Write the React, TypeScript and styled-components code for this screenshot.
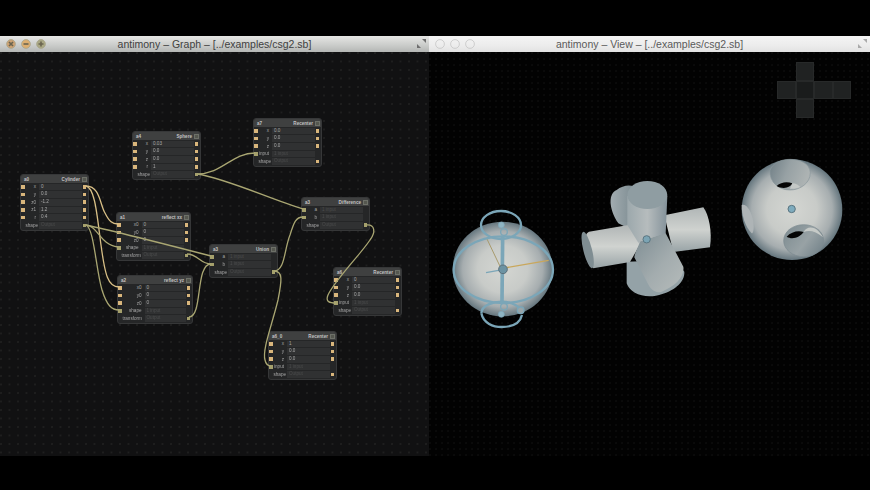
import styled, { createGlobalStyle } from "styled-components";

const GlobalStyle = createGlobalStyle`
  html, body {
    margin: 0;
    padding: 0;
    background: #000;
    overflow: hidden;
  }
`;

const Page = styled.div`
  width: 870px;
  height: 490px;
  background: #000;
  padding-top: 36px;
  box-sizing: border-box;
  font-family: "Liberation Sans", Arial, sans-serif;
`;

const Windows = styled.div`
  display: flex;
  height: 420px;
`;

const Window = styled.section<{ $width: number }>`
  width: ${(p) => p.$width}px;
  display: flex;
  flex-direction: column;
`;

const TitleBar = styled.header<{ $active?: boolean }>`
  height: 16px;
  position: relative;
  display: flex;
  align-items: center;
  justify-content: center;
  font-size: 10.5px;
  color: ${(p) => (p.$active ? "#3f3f3f" : "#5a5a5a")};
  background: ${(p) =>
    p.$active
      ? "linear-gradient(#e6e6e4, #c9cbc9 60%, #b4b6b4)"
      : "linear-gradient(#f4f4f4, #ececec 60%, #e2e2e2)"};
`;

const Lights = styled.div`
  position: absolute;
  left: 6px;
  top: 3px;
  display: flex;
  gap: 5px;
`;

const Light = styled.svg`
  width: 10px;
  height: 10px;
`;

const ResizeGrip = styled.svg`
  position: absolute;
  right: 2px;
  top: 2px;
  width: 11px;
  height: 11px;
`;

const GraphCanvas = styled.div`
  flex: 1;
  position: relative;
  overflow: hidden;
  background-color: #111112;
  background-image: radial-gradient(circle at 1px 1px, #1f1f1f 0.7px, transparent 1px);
  background-size: 8.5px 8.5px;
`;

const Wires = styled.svg`
  position: absolute;
  inset: 0;
  width: 100%;
  height: 100%;
  z-index: 2;
  pointer-events: none;
  filter: blur(0.3px);
`;

const ViewCanvas = styled.div`
  flex: 1;
  position: relative;
  overflow: hidden;
  background-color: #020202;
  background-image: radial-gradient(circle at 1px 1px, #0c0c0c 0.6px, transparent 1px);
  background-size: 6px 6px;
`;

const Scene = styled.svg`
  position: absolute;
  inset: 0;
  width: 100%;
  height: 100%;
`;

const ViewCube = styled.div`
  position: absolute;
  left: 348px;
  top: 10px;
  display: grid;
  grid-template-columns: repeat(4, 18.5px);
  grid-template-rows: repeat(3, 18.5px);
`;

const CubeFace = styled.div<{ $col: number; $row: number; $dark?: boolean }>`
  grid-column: ${(p) => p.$col};
  grid-row: ${(p) => p.$row};
  box-sizing: border-box;
  background: ${(p) => (p.$dark ? "#1a1c1c" : "#202222")};
  border: 1px solid #272929;
`;

const NodeBox = styled.div<{ $x: number; $y: number; $w: number }>`
  position: absolute;
  left: ${(p) => p.$x}px;
  top: ${(p) => p.$y}px;
  width: ${(p) => p.$w}px;
  box-sizing: border-box;
  padding-bottom: 1px;
  background: #252627;
  border: 1px solid #363738;
  border-radius: 3px;
  font-size: 4.6px;
  line-height: 7px;
  color: #a8a8a8;
  filter: blur(0.35px);
`;

const NodeHeader = styled.div`
  height: 8px;
  display: flex;
  align-items: center;
  gap: 2px;
  padding: 0 1px 0 3px;
  background: #3f4040;
  border-radius: 2px 2px 0 0;
  font-weight: bold;
  color: #c2c2c2;
`;

const NodeName = styled.span`
  flex: 1;
`;

const NodeMenu = styled.span`
  width: 5px;
  height: 5px;
  box-sizing: border-box;
  border: 1px solid #6d7068;
  background: #55574f;
`;

const NodeRow = styled.div<{ $label: number }>`
  display: grid;
  grid-template-columns: 3.5px ${(p) => p.$label}px 1fr 3.5px;
  align-items: center;
  column-gap: 1px;
  height: 7.7px;
  padding: 0 2px 0 0;
`;

const Port = styled.span<{ $wired?: boolean }>`
  width: 3.5px;
  height: 3.5px;
  background: ${(p) => (p.$wired ? "#a5a06c" : "#d9b67c")};
`;

const RowLabel = styled.span`
  text-align: right;
  padding-right: 2px;
  color: #a6a6a6;
`;

const RowField = styled.span<{ $dim?: boolean }>`
  height: 6.6px;
  line-height: 6.6px;
  padding-left: 2px;
  overflow: hidden;
  white-space: nowrap;
  background: #303132;
  color: ${(p) => (p.$dim ? "#4c4d4d" : "#a9a9a9")};
`;

type Row = {
  label: string;
  value: string;
  dim?: boolean;
  input?: boolean;
  output?: boolean;
  wired?: boolean;
};

type GraphNode = {
  name: string;
  kind: string;
  x: number;
  y: number;
  w: number;
  label: number;
  rows: Row[];
};

const num = (label: string, value: string): Row => ({ label, value, input: true, output: true });
const inp = (label: string, wired = true): Row => ({
  label,
  value: "1 input",
  dim: true,
  input: true,
  wired,
});
const out = (label: string, wired = false): Row => ({
  label,
  value: "Output",
  dim: true,
  output: true,
  wired,
});

const nodes: GraphNode[] = [
  {
    name: "a4",
    kind: "Sphere",
    x: 132,
    y: 79,
    w: 69,
    label: 12.5,
    rows: [num("x", "0.03"), num("y", "0.0"), num("z", "0.0"), num("r", "1"), out("shape", true)],
  },
  {
    name: "a7",
    kind: "Recenter",
    x: 253,
    y: 66,
    w: 69,
    label: 12.5,
    rows: [num("x", "0.0"), num("y", "0.0"), num("z", "0.0"), inp("input"), out("shape")],
  },
  {
    name: "a0",
    kind: "Cylinder",
    x: 20,
    y: 122,
    w: 69,
    label: 12.5,
    rows: [
      num("x", "0"),
      num("y", "0.0"),
      num("z0", "-1.2"),
      num("z1", "1.2"),
      num("r", "0.4"),
      out("shape", true),
    ],
  },
  {
    name: "a1",
    kind: "reflect xx",
    x: 116,
    y: 160,
    w: 75,
    label: 19,
    rows: [num("x0", "0"), num("y0", "0"), num("z0", "0"), inp("shape"), out("transform", true)],
  },
  {
    name: "a2",
    kind: "reflect yz",
    x: 117,
    y: 223,
    w: 76,
    label: 21,
    rows: [num("x0", "0"), num("y0", "0"), num("z0", "0"), inp("shape"), out("transform", true)],
  },
  {
    name: "a3",
    kind: "Union",
    x: 209,
    y: 192,
    w: 69,
    label: 12.5,
    rows: [inp("a"), inp("b"), out("shape", true)],
  },
  {
    name: "a3",
    kind: "Difference",
    x: 301,
    y: 145,
    w: 69,
    label: 12.5,
    rows: [inp("a"), inp("b"), out("shape", true)],
  },
  {
    name: "a6",
    kind: "Recenter",
    x: 333,
    y: 215,
    w: 69,
    label: 12.5,
    rows: [num("x", "0"), num("y", "0.0"), num("z", "0.0"), inp("input"), out("shape")],
  },
  {
    name: "a6_0",
    kind: "Recenter",
    x: 268,
    y: 279,
    w: 69,
    label: 12.5,
    rows: [num("x", "1"), num("y", "0.0"), num("z", "0.0"), inp("input"), out("shape")],
  },
];

// wire paths, in page coordinates
const goldWires = [
  "M86 186 C100 186 100 205 105 213 C109 221 112 224 118 224",
  "M86 186 C95 188 97 215 101 245 C105 275 108 287 119 287",
];

const oliveWires = [
  "M86 225 C98 226 100 245 118 247",
  "M86 225 C94 228 96 270 102 290 C107 306 112 310 119 310",
  "M86 225 C110 230 180 248 211 256",
  "M197 174 C222 174 232 153 255 153",
  "M197 174 C225 178 270 199 303 209",
  "M187 254 C198 254 200 264 211 264",
  "M189 317 C203 317 195 264 211 264",
  "M274 271 C285 271 284 250 290 235 C294 222 296 217 303 217",
  "M274 271 C283 271 282 280 278 300 C272 325 262 350 265 360 C266 365 268 366 271 366",
  "M366 225 C375 224 376 232 370 240 C360 255 335 280 328 295 C325 302 330 303 336 303",
];

function Node({ node }: { node: GraphNode }) {
  return (
    <NodeBox $x={node.x} $y={node.y} $w={node.w}>
      <NodeHeader>
        <NodeName>{node.name}</NodeName>
        {node.kind}
        <NodeMenu />
      </NodeHeader>
      {node.rows.map((row) => (
        <NodeRow key={row.label} $label={node.label}>
          {row.input ? <Port $wired={row.wired} /> : <span />}
          <RowLabel>{row.label}</RowLabel>
          <RowField $dim={row.dim}>{row.value}</RowField>
          {row.output ? <Port $wired={row.wired} /> : <span />}
        </NodeRow>
      ))}
    </NodeBox>
  );
}

function WindowLight({ color, glyph }: { color: string; glyph?: string }) {
  return (
    <Light viewBox="0 0 10 10">
      <circle cx="5" cy="5" r="4.4" fill={color} stroke={glyph ? "#a8a48c" : "#c6c6c6"} strokeWidth="0.8" />
      {glyph && <path d={glyph} stroke="#6a6450" strokeWidth="1.6" fill="none" />}
    </Light>
  );
}

function GizmoSphere() {
  const ring = { fill: "none", stroke: "#7ba6b8", strokeWidth: 7 };
  return (
    <g transform="translate(430 195) scale(0.3333)">
      <ellipse cx="218" cy="222" rx="150" ry="142" fill="url(#ballShade)" />
      <path d="M170 130 L212 218" stroke="#a89a6c" strokeWidth="3" fill="none" />
      <path d="M218 220 L356 196" stroke="#c9a75c" strokeWidth="4" fill="none" />
      <path d="M168 233 L218 224" stroke="#7ba6b8" strokeWidth="4" fill="none" />
      <ellipse cx="220" cy="224" rx="149" ry="100" {...ring} />
      <ellipse cx="213" cy="90" rx="60" ry="42" {...ring} />
      <path d="M154 355 C155 330 190 320 215 320 C245 320 275 335 276 355" {...ring} />
      <path d="M154 355 C160 385 190 396 215 396 C245 396 270 385 276 360" {...ring} />
      <path d="M218 125 L216 320" stroke="#7ba6b8" strokeWidth="11" fill="none" />
      <circle cx="214" cy="90" r="9" fill="#8fb4c2" stroke="#7ba6b8" strokeWidth="2" />
      <circle cx="222" cy="111" r="10" fill="none" stroke="#7ba6b8" strokeWidth="4" />
      <circle cx="222" cy="335" r="10" fill="none" stroke="#7ba6b8" strokeWidth="4" />
      <circle cx="214" cy="358" r="9" fill="#8fb4c2" stroke="#7ba6b8" strokeWidth="2" />
      <circle cx="272" cy="346" r="10" fill="#99a5a8" stroke="#7ba6b8" strokeWidth="4" />
      <circle cx="219" cy="223" r="13" fill="#6c93a3" stroke="#5b6e78" strokeWidth="3" />
    </g>
  );
}

function CrossShape() {
  return (
    <g transform="translate(575 170) scale(0.3333)">
      <path d="M130 160 C100 115 100 70 125 60 C145 45 175 40 190 60 L190 120 L170 180 Z" fill="url(#armBack)" />
      <path d="M155 275 L155 340 C165 372 215 390 262 372 C300 360 330 335 328 305 L300 270 Z" fill="#94a2a7" />
      <path d="M268 136 L385 112 C402 135 412 185 405 232 L295 246 Z" fill="url(#armRight)" />
      <path d="M165 164 L42 185 C20 195 25 255 55 295 L165 276 L200 215 Z" fill="url(#armLeft)" />
      <ellipse cx="38" cy="240" rx="13" ry="56" transform="rotate(-14 38 240)" fill="#7f8d92" />
      <path d="M157 78 L157 165 L190 218 L272 192 L277 78 Z" fill="url(#armTop)" />
      <ellipse cx="217" cy="75" rx="60" ry="42" fill="#8f9da2" />
      <path
        d="M195 215 L272 190 L325 290 C330 320 300 350 260 365 C240 372 225 355 218 340 L178 262 C180 245 190 230 195 215 Z"
        fill="url(#armFront)"
      />
      <circle cx="215" cy="208" r="11" fill="#7ba4b4" stroke="#5a7480" strokeWidth="3" />
    </g>
  );
}

function HollowSphere() {
  return (
    <g transform="translate(735 150) scale(0.3333)">
      <circle cx="171" cy="179" r="151" fill="url(#ballShade)" />
      <path
        d="M105 62 C112 38 140 28 165 28 C195 28 224 40 226 68 C226 100 195 120 165 120 C130 120 103 95 105 62 Z"
        fill="url(#holeShade)"
        stroke="#8a979c"
        strokeWidth="2"
      />
      <path d="M125 108 C138 95 158 94 172 100 C168 112 145 120 125 108 Z" fill="#050505" />
      <path d="M172 100 C182 100 192 106 196 111 C188 115 175 118 165 116 Z" fill="#c4c8c6" />
      <ellipse cx="206" cy="272" rx="60" ry="48" fill="url(#holeShadeLow)" stroke="#7c8a90" strokeWidth="2" />
      <path d="M155 260 C168 245 190 240 206 246 C195 262 172 270 155 260 Z" fill="#050505" />
      <path d="M206 246 C216 226 245 226 264 262 C242 244 225 240 206 246 Z" fill="#c6cac7" />
      <path d="M20 165 C35 160 50 185 55 215 C58 235 55 250 50 250 C30 230 20 195 20 165 Z" fill="#aeb4b6" />
      <circle cx="170" cy="177" r="11" fill="#7eabbd" stroke="#5a7480" strokeWidth="3" />
    </g>
  );
}

const cubeFaces = [
  { col: 2, row: 1 },
  { col: 1, row: 2 },
  { col: 2, row: 2, dark: true },
  { col: 3, row: 2 },
  { col: 4, row: 2 },
  { col: 2, row: 3 },
];

export default function App() {
  return (
    <>
      <GlobalStyle />
      <Page>
        <Windows>
          <Window $width={429}>
            <TitleBar $active>
              <Lights>
                <WindowLight color="#cda273" glyph="M3 3l4 4M7 3l-4 4" />
                <WindowLight color="#dcae70" glyph="M2.5 5h5" />
                <WindowLight color="#aaa884" glyph="M2.5 5h5M5 2.5v5" />
              </Lights>
              antimony – Graph – [../examples/csg2.sb]
              <ResizeGrip viewBox="0 0 11 11">
                <path d="M6 1h4v4zM1 10V6l4 4z" fill="#6e6e6e" />
              </ResizeGrip>
            </TitleBar>
            <GraphCanvas>
              {nodes.map((node) => (
                <Node key={node.name + node.kind} node={node} />
              ))}
              <Wires viewBox="0 52 429 404">
                {goldWires.map((d) => (
                  <path key={d} d={d} fill="none" stroke="#d8bf86" strokeWidth="1.3" />
                ))}
                {oliveWires.map((d) => (
                  <path key={d} d={d} fill="none" stroke="#a9a672" strokeWidth="1.3" />
                ))}
              </Wires>
            </GraphCanvas>
          </Window>
          <Window $width={441}>
            <TitleBar>
              <Lights>
                <WindowLight color="transparent" />
                <WindowLight color="transparent" />
                <WindowLight color="transparent" />
              </Lights>
              antimony – View – [../examples/csg2.sb]
              <ResizeGrip viewBox="0 0 11 11">
                <path d="M6 1h4v4zM1 10V6l4 4z" fill="#aaa" />
              </ResizeGrip>
            </TitleBar>
            <ViewCanvas>
              <Scene viewBox="429 52 441 404">
                <defs>
                  <radialGradient id="ballShade">
                    <stop offset="0" stopColor="#d4d6d2" />
                    <stop offset="0.5" stopColor="#c8cbc8" />
                    <stop offset="0.8" stopColor="#a6adaf" />
                    <stop offset="1" stopColor="#65767e" />
                  </radialGradient>
                  <linearGradient id="holeShade" x1="0" y1="0" x2="1" y2="0.3">
                    <stop offset="0" stopColor="#6f7e85" />
                    <stop offset="0.5" stopColor="#97a1a4" />
                    <stop offset="1" stopColor="#adb3b3" />
                  </linearGradient>
                  <linearGradient id="holeShadeLow" x1="0" y1="0.2" x2="1" y2="0.8">
                    <stop offset="0" stopColor="#7f8d92" />
                    <stop offset="0.55" stopColor="#98a2a5" />
                    <stop offset="1" stopColor="#74838a" />
                  </linearGradient>
                  <linearGradient id="armTop" x1="0" y1="0" x2="1" y2="0">
                    <stop offset="0" stopColor="#9ca8ac" />
                    <stop offset="0.5" stopColor="#b6bcbd" />
                    <stop offset="1" stopColor="#84929a" />
                  </linearGradient>
                  <linearGradient id="armBack" x1="0" y1="0" x2="1" y2="0">
                    <stop offset="0" stopColor="#a2acb0" />
                    <stop offset="1" stopColor="#76868c" />
                  </linearGradient>
                  <linearGradient id="armRight" x1="0" y1="0" x2="0" y2="1">
                    <stop offset="0" stopColor="#b0b6b6" />
                    <stop offset="0.5" stopColor="#cfd2cf" />
                    <stop offset="1" stopColor="#98a3a6" />
                  </linearGradient>
                  <linearGradient id="armLeft" x1="0" y1="0" x2="0" y2="1">
                    <stop offset="0" stopColor="#b0b5b5" />
                    <stop offset="0.5" stopColor="#d0d3d0" />
                    <stop offset="1" stopColor="#98a3a6" />
                  </linearGradient>
                  <linearGradient id="armFront" x1="0" y1="0" x2="1" y2="1">
                    <stop offset="0" stopColor="#7e8d93" />
                    <stop offset="0.55" stopColor="#a3acae" />
                    <stop offset="1" stopColor="#b6bcbb" />
                  </linearGradient>
                </defs>
                <GizmoSphere />
                <CrossShape />
                <HollowSphere />
              </Scene>
              <ViewCube>
                {cubeFaces.map((face) => (
                  <CubeFace key={`${face.col}-${face.row}`} $col={face.col} $row={face.row} $dark={face.dark} />
                ))}
              </ViewCube>
            </ViewCanvas>
          </Window>
        </Windows>
      </Page>
    </>
  );
}
